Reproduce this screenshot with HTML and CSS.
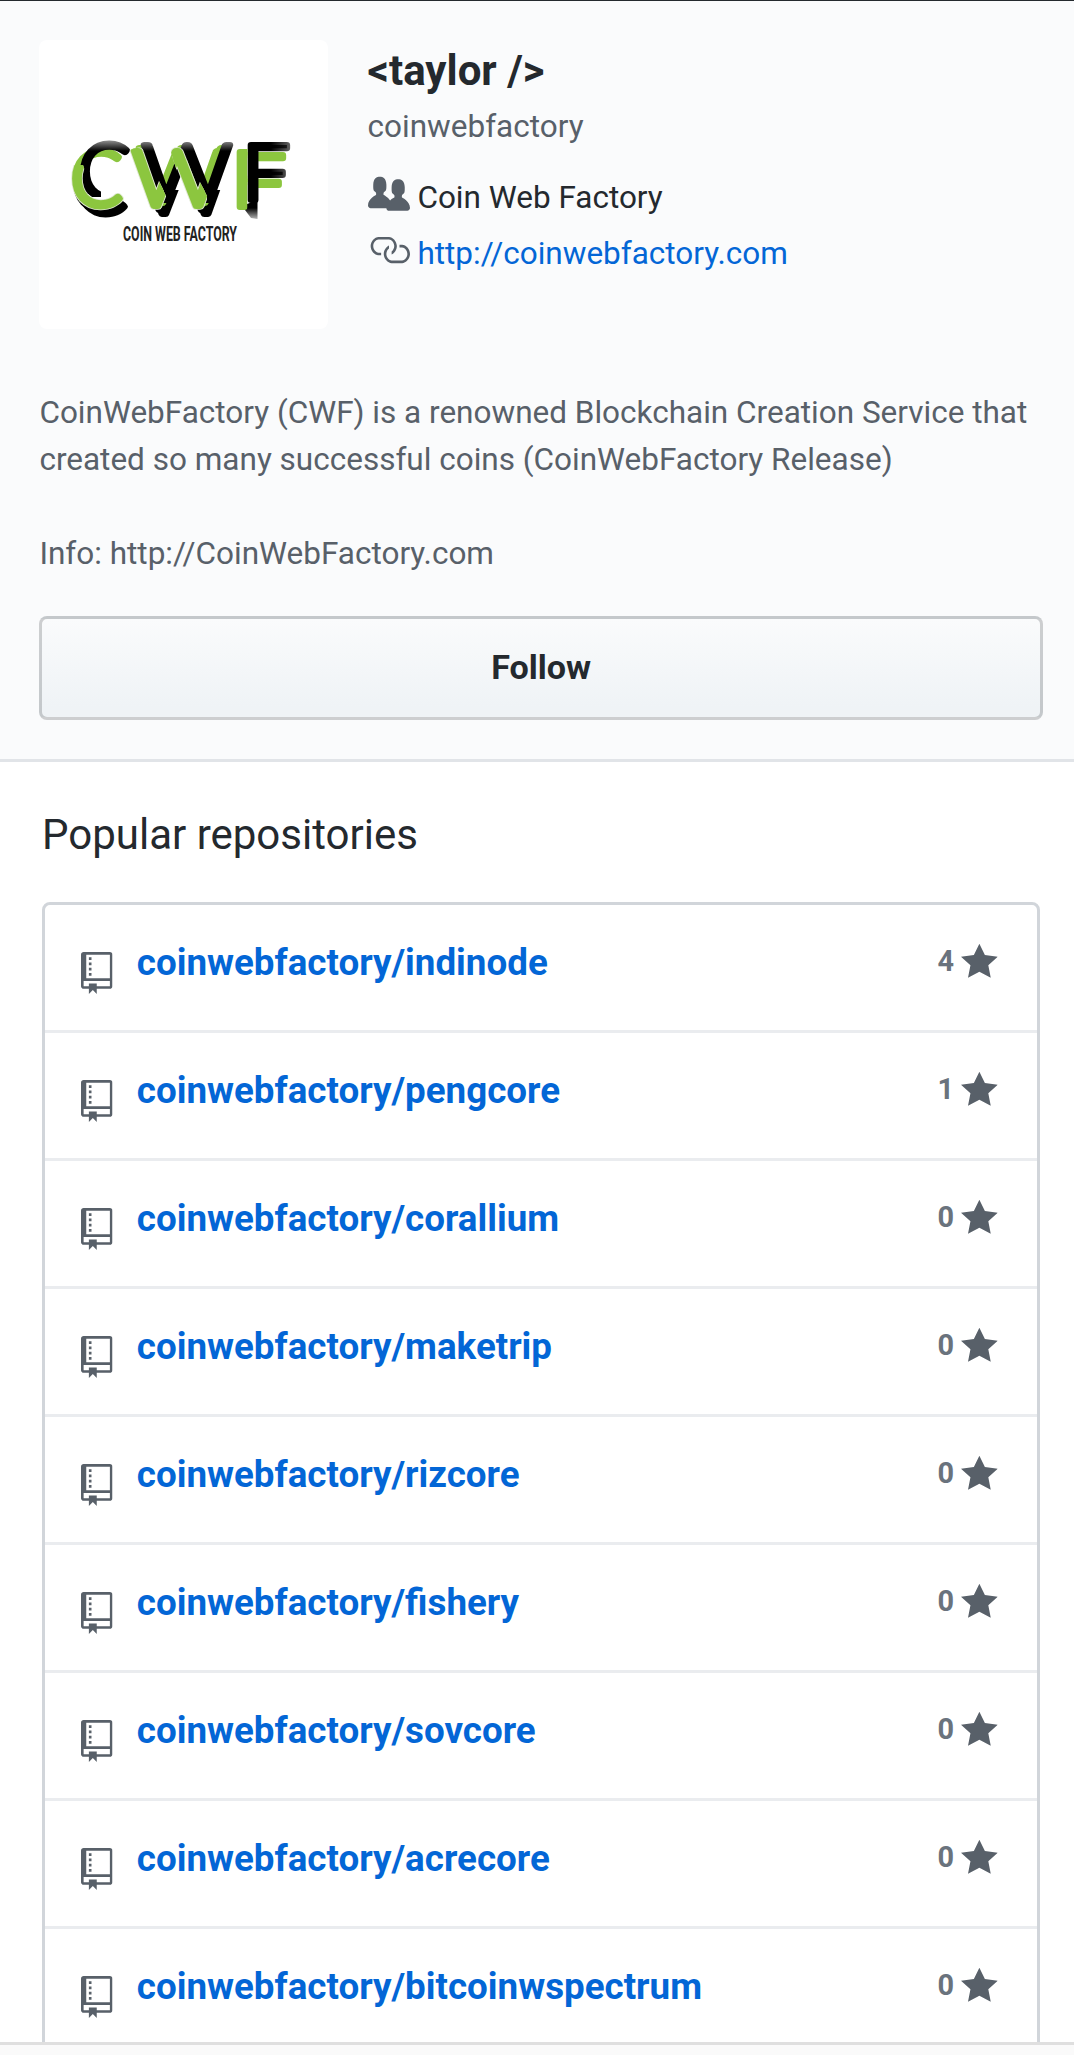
FILE: index.html
```
<!DOCTYPE html>
<html lang="en">
<head>
  <meta charset="UTF-8" />
  <meta name="viewport" content="width=device-width, initial-scale=1.0"/>
  <title>coinwebfactory (taylor)</title>
  <link rel="stylesheet" href="styles.css">
</head>
<body>
  <!-- Icons shared by the rows -->
  <svg class="sprite" width="0" height="0">
    <symbol id="icon-repo" viewBox="0 0 12 16">
      <path fill-rule="evenodd" d="M4 9H3V8h1v1zm0-3H3v1h1V6zm0-2H3v1h1V4zm0-2H3v1h1V2zm8-1v12c0 .55-.45 1-1 1H6v2l-1.5-1.5L3 16v-2H1c-.55 0-1-.45-1-1V1c0-.55.45-1 1-1h10c.55 0 1 .45 1 1zm-1 10H1v2h2v-1h3v1h5v-2zm0-10H2v9h9V1z"/>
    </symbol>
    <symbol id="icon-star" viewBox="0 0 14 16">
      <path fill-rule="evenodd" d="M14 6l-4.9-.64L7 1 4.9 5.36 0 6l3.6 3.26L2.67 14 7 11.67 11.33 14l-.93-4.74L14 6z"/>
    </symbol>
  </svg>

  <header class="profile">
    <div class="profile-top">
      <svg class="avatar" viewBox="0 0 289 289">
        <defs>
          <linearGradient id="ink" gradientUnits="userSpaceOnUse" x1="0" y1="101" x2="0" y2="111">
            <stop offset="0" stop-color="#888"/>
            <stop offset="1" stop-color="#000"/>
          </linearGradient>
          <linearGradient id="ink-side" gradientUnits="userSpaceOnUse" x1="232" y1="0" x2="252" y2="0">
            <stop offset="0" stop-color="#000"/>
            <stop offset="1" stop-color="#000" stop-opacity=".6"/>
          </linearGradient>
          <linearGradient id="fade" gradientUnits="userSpaceOnUse" x1="0" y1="168" x2="0" y2="182">
            <stop offset="0" stop-color="#000"/>
            <stop offset="1" stop-color="#000" stop-opacity=".1"/>
          </linearGradient>
          <clipPath id="clip-front">
            <path d="M30 125H44L52 148H95V176H30Z"/>
            <path d="M90 110L104 106L127 156V176H112Z"/>
            <path d="M130 106L143 106L168 156V176H152Z"/>
            <path d="M194 104H208.5V176H194Z"/>
          </clipPath>
          <clipPath id="clip-c"><path d="M30 95H95V140H62V157H30Z"/></clipPath>
          <clipPath id="clip-bars"><path d="M214 100H260V160H214Z"/></clipPath>
          <clipPath id="clip-shadow">
            <path d="M30 145H60L84 160H98V185H30Z"/>
            <path d="M112 150H182V185H112Z"/>
          </clipPath>
          <text id="logo-c" x="39.5" y="159" textLength="52" lengthAdjust="spacingAndGlyphs">C</text>
          <text id="logo-w" x="103" y="160" textLength="90" lengthAdjust="spacingAndGlyphs">W</text>
          <text id="logo-f" x="203" y="160" textLength="48" lengthAdjust="spacingAndGlyphs">F</text>
        </defs>
        <g class="logo">
          <g fill="url(#fade)" stroke="url(#fade)" clip-path="url(#clip-shadow)">
            <use href="#logo-c" x="-7" y="11"/>
            <use href="#logo-c" x="-3" y="15"/>
            <use href="#logo-w" x="-5" y="10"/>
            <use href="#logo-w" x="-2" y="14"/>
          </g>
          <path d="M203 166L212 178L218.5 179V160Z" fill="url(#fade)"/>
          <g fill="#8cc63f" stroke="#8cc63f">
            <use href="#logo-c" x="-8" y="7"/>
            <use href="#logo-w" x="-9" y="6"/>
            <use href="#logo-w" x="-5" y="3"/>
            <g clip-path="url(#clip-bars)">
              <use href="#logo-f" x="-4" y="10"/>
            </g>
          </g>
          <g fill="url(#ink)" stroke="url(#ink)">
            <g clip-path="url(#clip-c)">
              <use href="#logo-c"/>
            </g>
            <use href="#logo-w"/>
          </g>
          <g fill="url(#ink-side)" stroke="url(#ink-side)">
            <use href="#logo-f"/>
          </g>
          <g clip-path="url(#clip-front)">
            <g class="outline">
              <use href="#logo-c" x="-8" y="7"/>
              <use href="#logo-w" x="-10" y="6"/>
            </g>
            <g fill="#8cc63f" stroke="#8cc63f">
              <use href="#logo-c" x="-8" y="7"/>
              <use href="#logo-w" x="-10" y="6"/>
              <use href="#logo-f" x="-11" y="7"/>
            </g>
          </g>
        </g>
        <text class="logo-caption" x="84" y="200.7" textLength="114" lengthAdjust="spacingAndGlyphs">COIN WEB FACTORY</text>
      </svg>

      <div class="vcard">
        <h1>&lt;taylor /&gt;</h1>
        <p class="username">coinwebfactory</p>
        <p class="detail">
          <svg class="icon" viewBox="0 0 16 16"><path fill-rule="evenodd" d="M16 12.999c0 .439-.45 1-1 1H7.995c-.539 0-.994-.447-.995-.999H1c-.54 0-1-.561-1-1 0-2.634 3-4 3-4s.229-.409 0-1c-.841-.621-1.058-.59-1-3 .058-2.419 1.367-3 2.5-3s2.442.58 2.5 3c.058 2.41-.159 2.379-1 3-.229.59 0 1 0 1s1.549.711 2.42 2.088C9.196 9.369 10 8.999 10 8.999s.229-.409 0-1c-.841-.62-1.058-.59-1-3 .058-2.419 1.367-3 2.5-3s2.437.581 2.495 3c.059 2.41-.158 2.38-1 3-.229.59 0 1 0 1s3.005 1.366 3.005 4z"/></svg>
          Coin Web Factory
        </p>
        <p class="detail">
          <svg class="icon" viewBox="0 0 16 16"><path fill-rule="evenodd" d="M4 9h1v1H4c-1.5 0-3-1.69-3-3.5S2.55 3 4 3h4c1.45 0 3 1.69 3 3.5 0 1.41-.91 2.72-2 3.25V8.59c.58-.45 1-1.27 1-2.09C10 5.28 8.98 4 8 4H4c-.98 0-2 1.22-2 2.5S3 9 4 9zm9-3h-1v1h1c1 0 2 1.22 2 2.5S13.98 12 13 12H9c-.98 0-2-1.22-2-2.5 0-.83.42-1.64 1-2.09V6.25c-1.09.53-2 1.84-2 3.25C6 11.31 7.55 13 9 13h4c1.45 0 3-1.69 3-3.5S14.5 6 13 6z"/></svg>
          <a href="#">http://coinwebfactory.com</a>
        </p>
      </div>
    </div>

    <p class="bio">CoinWebFactory (CWF) is a renowned Blockchain Creation Service that<br>created so many successful coins (CoinWebFactory Release)<br><br>Info: http://CoinWebFactory.com</p>

    <button class="follow">Follow</button>
  </header>

  <main class="repos">
    <h2>Popular repositories</h2>
    <div class="repo-list" id="repoList"></div>
  </main>

  <footer class="bottom-bar"></footer>

  <script>
    const repos = [
      ["indinode", 4],
      ["pengcore", 1],
      ["corallium", 0],
      ["maketrip", 0],
      ["rizcore", 0],
      ["fishery", 0],
      ["sovcore", 0],
      ["acrecore", 0],
      ["bitcoinwspectrum", 0]
    ];

    const repoList = document.getElementById("repoList");
    repos.forEach(([name, stars]) => {
      const row = document.createElement("a");
      row.className = "repo";
      row.href = "#";
      row.innerHTML = `
        <svg class="repo-icon"><use href="#icon-repo"/></svg>
        <span class="repo-name">coinwebfactory/${name}</span>
        <span class="stars">${stars}</span>
        <svg class="star-icon"><use href="#icon-star"/></svg>`;
      repoList.appendChild(row);
    });
  </script>
</body>
</html>
```
FILE: styles.css
```
/* GLOBAL STYLES */
* {
  box-sizing: border-box;
  margin: 0;
  padding: 0;
}
body {
  height: 2055px;
  display: flex;
  flex-direction: column;
  overflow: hidden;
  border-top: 1px solid #24292e;
  background-color: #fff;
  color: #24292e;
  font-family: Roboto, sans-serif;
  font-size: 31.5px;
  line-height: 47.25px;
}
a {
  color: #0366d6;
  text-decoration: none;
}
svg {
  display: block;
  flex-shrink: 0;
  fill: #586069;
}
.sprite {
  position: absolute;
}

/* PROFILE HEADER */
.profile {
  flex-shrink: 0;
  height: 761px;
  padding: 39px 31px 0 39.4px;
  background-color: #fafbfc;
  border-bottom: 3px solid #e1e4e8;
}
.profile-top {
  display: flex;
  gap: 39.2px;
}
.avatar {
  width: 289px;
  height: 289px;
  border-radius: 8px;
  background-color: #fff;
}
.logo {
  font-family: Lato, sans-serif;
  font-size: 77px;
  font-weight: 300;
  stroke-width: 5.8px;
  stroke-linejoin: round;
}
.outline {
  fill: #dfe8d2;
  stroke: #dfe8d2;
  stroke-width: 7.4px;
}
.logo-caption {
  font-size: 19.4px;
  font-weight: 700;
  fill: #222;
}
.vcard {
  padding-top: 5.2px;
}
h1 {
  font-size: 42px;
  line-height: 52.5px;
}
.username {
  margin-top: 5.7px;
  margin-bottom: 23.8px;
  color: #586069;
}
.detail {
  display: flex;
  gap: 7.8px;
  margin-bottom: 8px;
}
.icon {
  width: 42px;
  height: 42px;
  margin-top: -0.3px;
}
.bio {
  margin-top: 59.6px;
  color: #586069;
}
.follow {
  display: block;
  width: 1003.6px;
  height: 104px;
  margin-top: 38.4px;
  padding-bottom: 2px;
  border: 3px solid rgba(27, 31, 35, 0.2);
  border-radius: 8px;
  background-color: #eff3f6;
  background-image: linear-gradient(#fafbfc, #eff3f6 90%);
  color: #24292e;
  font-family: inherit;
  font-size: 34.125px;
  font-weight: 700;
}

/* REPOSITORIES */
.repos {
  flex: 1;
  min-height: 0;
  overflow: hidden;
  padding: 46px 34px 0 42px;
}
h2 {
  margin-bottom: 41px;
  font-size: 42px;
  font-weight: 400;
  line-height: 53px;
}
.repo-list {
  border: 3px solid #d1d5da;
  border-radius: 8px;
}
.repo {
  display: flex;
  height: 128px;
  padding: 30px 39.5px 0 36px;
  border-bottom: 3px solid #eaecef;
}
.repo-icon {
  width: 31.5px;
  height: 42px;
  margin-top: 17px;
  margin-right: 24.3px;
}
.repo-name {
  flex: 1;
  font-size: 36.75px;
  font-weight: 700;
  line-height: 55px;
}
.stars {
  margin-right: 6.6px;
  color: #6a737d;
  font-size: 28.875px;
  font-weight: 700;
  line-height: 52.4px;
}
.star-icon {
  width: 36.75px;
  height: 42px;
  margin-top: 5.8px;
}

.bottom-bar {
  flex-shrink: 0;
  height: 13px;
  border-top: 3px solid #dfdfdf;
  background-color: #fafafa;
}
```
